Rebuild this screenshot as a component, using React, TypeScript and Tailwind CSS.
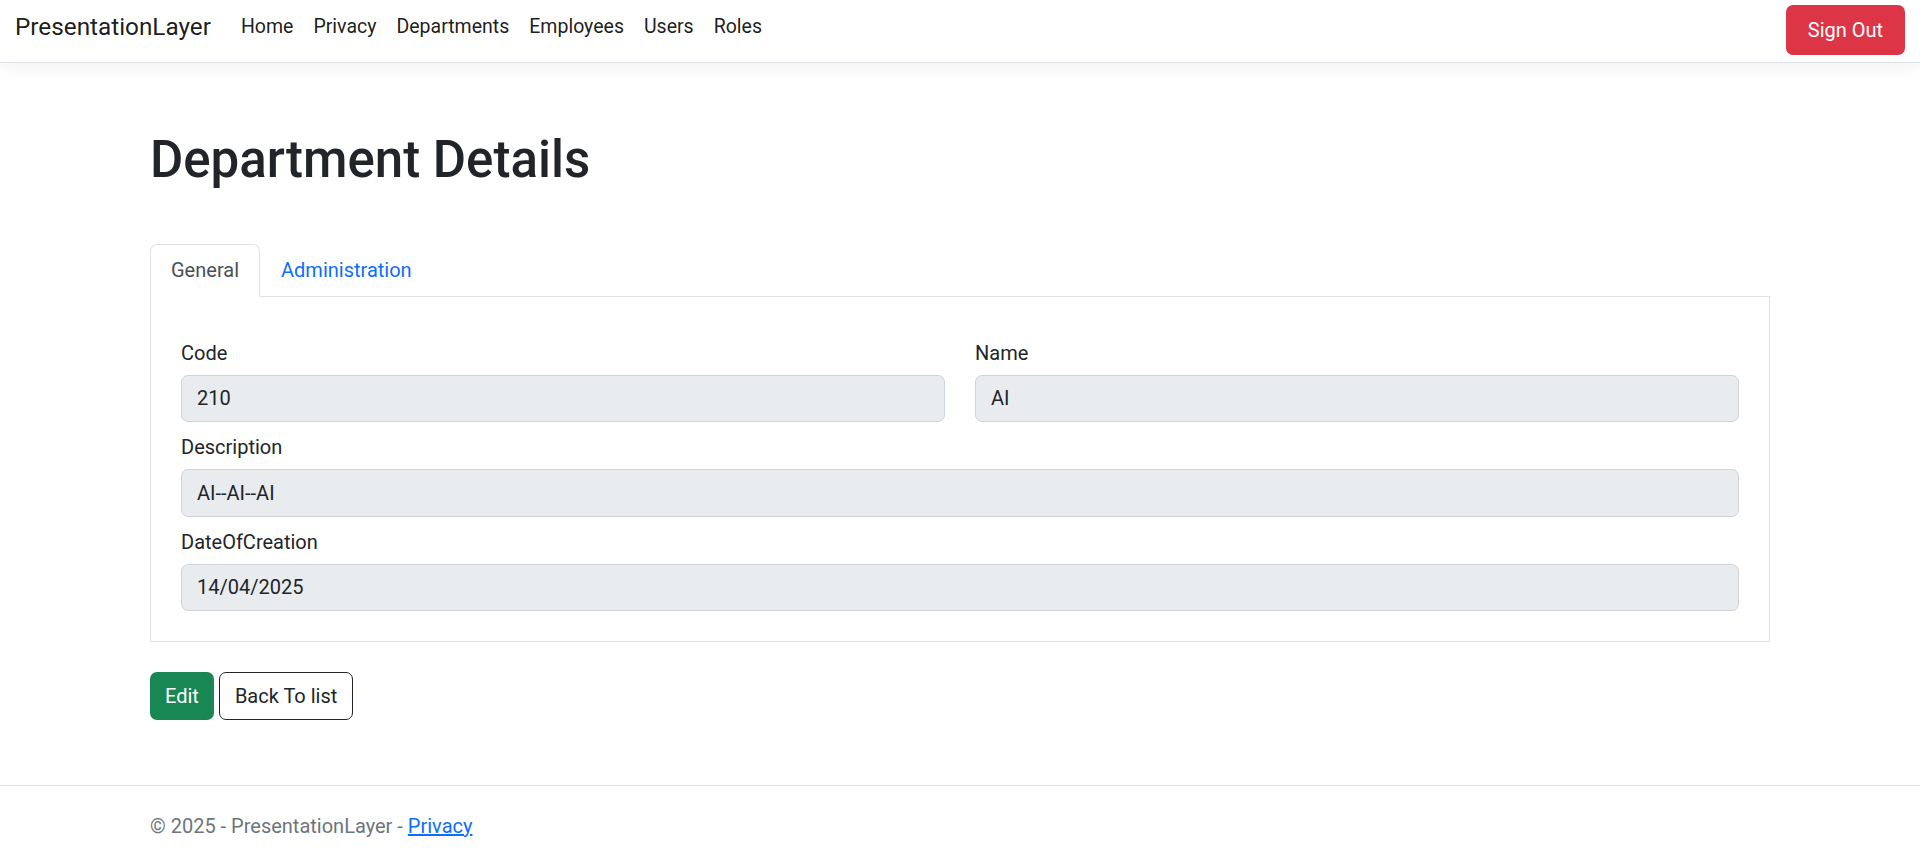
import { useState } from "react";

const navLinks = ["Home", "Privacy", "Departments", "Employees", "Users", "Roles"];

const Field = ({ label, value }: { label: string; value: string }) => {
  return (
    <div className="flex flex-col">
      <label className="mb-[7px] h-[30px] leading-[30px] text-[20px] text-[#212529]">{label}</label>
      <div className="flex h-[47.5px] items-center rounded-[7px] border border-[#ced4da] bg-[#e9ecef] px-[15px] text-[20px] text-[#212529]">
        {value}
      </div>
    </div>
  );
};

const App = () => {
  const [activeTab, setActiveTab] = useState("General");

  return (
    <div className="min-h-screen bg-white font-['Segoe_UI',Roboto,'Liberation_Sans',sans-serif] text-[#212529]">
      <header className="flex h-[63px] items-center border-b border-[#dee2e6] bg-white pb-[8px] pl-[15px] pr-[15px] shadow-[0_5px_15px_rgba(0,0,0,0.05)]">
        <a className="mr-[20px] text-[24.3px] leading-[30px] text-[#000000e6]">PresentationLayer</a>
        <nav className="flex items-center">
          {navLinks.map((link) => (
            <a key={link} className="px-[10px] text-[19.5px] leading-[30px] text-[#000000e6]">
              {link}
            </a>
          ))}
        </nav>
        <button className="ml-auto mt-[5px] h-[50px] w-[119px] rounded-[7px] bg-[#dc3545] text-[20px] text-white">
          Sign Out
        </button>
      </header>

      <main className="mx-[150px] pt-[67px]">
        <h1 className="text-[51px] font-medium leading-[60px] text-[#212529]">Department Details</h1>

        <div className="mt-[54px] flex border-b border-[#dee2e6]">
          {["General", "Administration"].map((tab) =>
            tab === activeTab ? (
              <button
                key={tab}
                className="-mb-px h-[52.5px] rounded-t-[7px] border border-[#dee2e6] border-b-white bg-white px-[20px] text-[20px] text-[#495057]"
              >
                {tab}
              </button>
            ) : (
              <button
                key={tab}
                onClick={() => setActiveTab(tab)}
                className="-mb-px h-[52.5px] border border-transparent px-[20px] text-[20px] text-[#0d6efd]"
              >
                {tab}
              </button>
            )
          )}
        </div>

        <div className="border border-t-0 border-[#dee2e6] px-[30px] pb-[30px] pt-[41px]">
          <div className="flex flex-col gap-[10px]">
            <div className="grid grid-cols-2 gap-x-[30px]">
              <Field label="Code" value="210" />
              <Field label="Name" value="AI" />
            </div>
            <Field label="Description" value="AI--AI--AI" />
            <Field label="DateOfCreation" value="14/04/2025" />
          </div>
        </div>

        <div className="mt-[30px] flex gap-[5px]">
          <button className="h-[47.5px] rounded-[7px] bg-[#198754] px-[15px] text-[20px] text-white">Edit</button>
          <button className="h-[47.5px] rounded-[7px] border border-[#212529] bg-white px-[15px] text-[20px] text-[#212529]">
            Back To list
          </button>
        </div>
      </main>

      <footer className="mt-[65px] border-t border-[#dee2e6] px-[150px] pt-[25px] text-[20px] leading-[30px] text-[#6c757d]">
        © 2025 - PresentationLayer - <a className="text-[#0d6efd] underline">Privacy</a>
      </footer>
    </div>
  );
};

export default App;
